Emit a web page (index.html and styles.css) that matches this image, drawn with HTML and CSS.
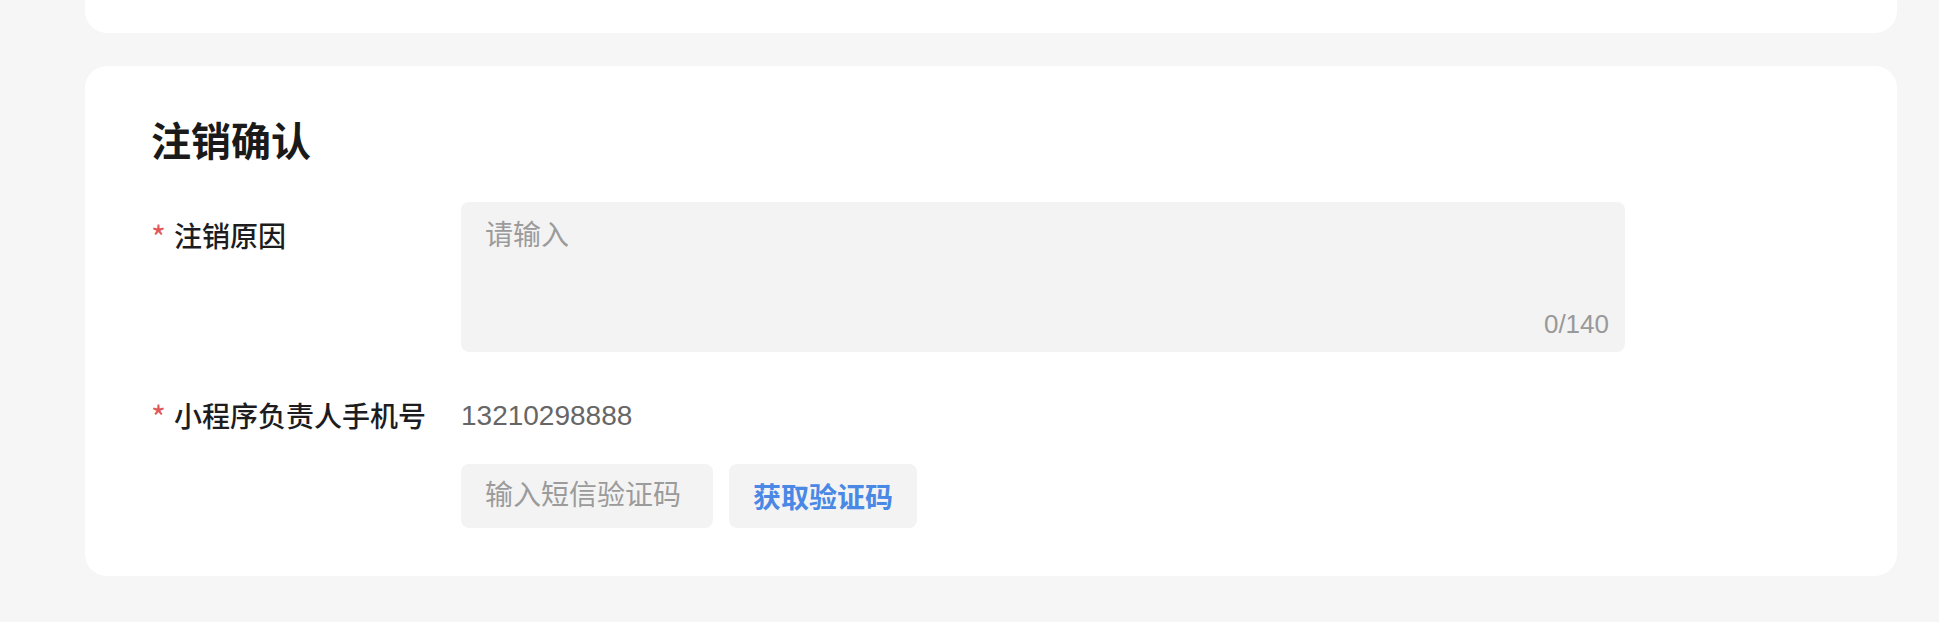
FILE: index.html
```html
<!DOCTYPE html>
<html lang="zh-CN">
<head>
  <meta charset="UTF-8">
  <title>注销确认</title>
  <link rel="stylesheet" href="styles.css">
</head>
<body>
  <div class="page">
    <div class="card-prev"></div>

    <div class="card">
      <h3 class="card-title">注销确认</h3>
      <form id="cancelForm">
        <div class="form-row">
          <label class="field-label"><span class="required">*</span>注销原因</label>
          <div class="textarea-box">
            <textarea name="reason" maxlength="140" placeholder="请输入"></textarea>
            <div class="counter">0/140</div>
          </div>
        </div>

        <div class="form-row">
          <label class="field-label"><span class="required">*</span>小程序负责人手机号</label>
          <div class="field-body">
            <div class="field-value">13210298888</div>
            <div class="code-row">
              <input type="text" name="code" class="code-input" placeholder="输入短信验证码">
              <button type="button" class="code-btn">获取验证码</button>
            </div>
          </div>
        </div>
      </form>
    </div>
  </div>
</body>
</html>
```

FILE: styles.css
```css
body {
  margin: 0;
  background-color: #f6f6f6;
  font-family: "Liberation Sans", "Noto Sans CJK SC", sans-serif;
  color: #1d1d1f;
}
.page {
  padding: 0 42px 0 85px;
}
.card-prev {
  height: 33px;
  background-color: white;
  border-radius: 0 0 22px 22px;
}
.card {
  margin-top: 33px;
  background-color: white;
  border-radius: 22px;
  padding: 48px 66px 48px;
}
.card-title {
  margin: 0 0 32px;
  font-size: 40px;
  line-height: 56px;
  font-weight: 700;
  color: #1a1a1a;
}
.form-row {
  display: flex;
  align-items: flex-start;
  margin-bottom: 30px;
}
.form-row:last-child {
  margin-bottom: 0;
}
.field-label {
  width: 310px;
  flex-shrink: 0;
  padding-top: 14px;
  font-size: 28px;
  line-height: 40px;
  font-weight: 500;
}
.required {
  display: inline-block;
  width: 23px;
  font-family: "Noto Sans CJK SC", sans-serif;
  font-size: 32px;
  vertical-align: -3px;
  color: #e0585a;
  font-weight: 400;
}
.textarea-box {
  width: 1164px;
  height: 150px;
  display: flex;
  flex-direction: column;
  background-color: #f3f3f3;
  border-radius: 8px;
}
.textarea-box textarea {
  flex: 1;
  min-height: 0;
  padding: 14px 24px 0;
  border: none;
  outline: none;
  resize: none;
  background: transparent;
  font-family: inherit;
  font-size: 28px;
  line-height: 40px;
  color: #333;
}
textarea::placeholder, input::placeholder {
  color: #9b9b9b;
}
.counter {
  padding: 0 16px 12px;
  text-align: right;
  font-size: 26px;
  line-height: 32px;
  color: #999;
}
.field-value {
  padding-top: 14px;
  font-size: 28px;
  line-height: 40px;
  color: #666;
}
.code-row {
  display: flex;
  gap: 16px;
  margin-top: 28px;
}
.code-input {
  box-sizing: border-box;
  width: 252px;
  height: 64px;
  padding: 0 24px;
  border: none;
  outline: none;
  border-radius: 8px;
  background-color: #f3f3f3;
  font-family: inherit;
  font-size: 28px;
}
.code-btn {
  height: 64px;
  padding: 0 24px;
  border: none;
  border-radius: 8px;
  background-color: #f3f3f3;
  color: #4a88e6;
  font-family: inherit;
  font-size: 28px;
  font-weight: 700;
  cursor: pointer;
}
```
